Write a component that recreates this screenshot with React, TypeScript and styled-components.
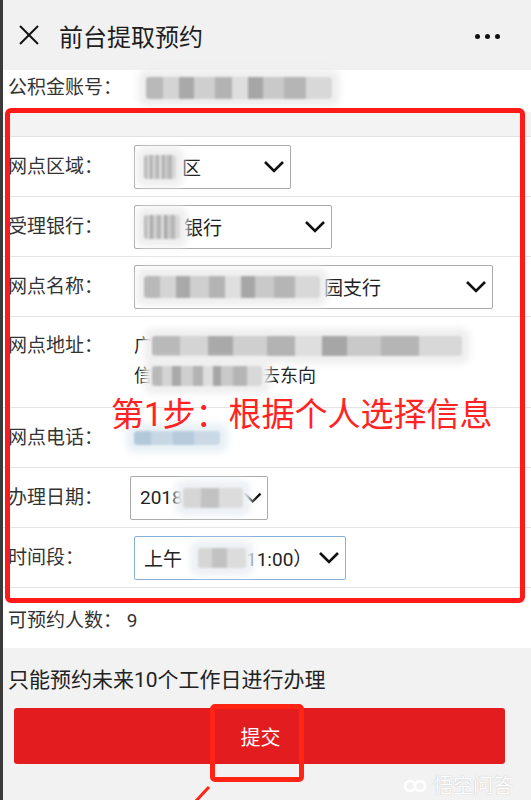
import React from "react";
import styled, { createGlobalStyle } from "styled-components";

const GlobalStyle = createGlobalStyle`
  html, body {
    margin: 0;
    padding: 0;
    background: #f2f2f2;
  }
  body {
    font-family: Roboto, "Noto Sans CJK SC", sans-serif;
    color: #333;
  }
`;

type Tone = "gray" | "blue" | "light";

const mosaics: Record<Tone, string> = {
  gray: `linear-gradient(90deg, #b9b9b9 0 9%, #d4d4d4 9% 18%, #a9a9a9 18% 26%, #cfcfcf 26% 37%, #b3b3b3 37% 46%, #dedede 46% 55%, #a6a6a6 55% 63%, #c9c9c9 63% 74%, #b5b5b5 74% 86%, #d8d8d8 86% 100%)`,
  blue: `linear-gradient(90deg, #b3c9da 0 20%, #c7d7e4 20% 45%, #b6cadb 45% 70%, #cad9e5 70% 100%)`,
  light: `linear-gradient(90deg, #d6d6d6 0 30%, #c2c2c2 30% 60%, #dcdcdc 60% 100%)`,
};

const halos: Record<Tone, string> = {
  gray: "rgba(238, 238, 238, 0.95)",
  blue: "rgba(232, 240, 246, 0.95)",
  light: "rgba(236, 240, 244, 0.95)",
};

const Page = styled.div`
  width: 531px;
  height: 800px;
  overflow: hidden;
  box-sizing: border-box;
  border-left: 3px solid #3a3a3a;
  background: #f2f2f2;
`;

const Header = styled.div`
  height: 70px;
  display: flex;
  align-items: center;
  padding-left: 15px;
  background: #f1f1f1;
`;

const Title = styled.div`
  margin-left: 19px;
  font-size: 24px;
  color: #1e1e1e;
  flex: 1;
`;

const Dots = styled.div`
  display: flex;
  gap: 5px;
  margin-right: 31px;
  margin-top: 2px;
`;

const Dot = styled.span`
  width: 5px;
  height: 5px;
  border-radius: 50%;
  background: #111;
`;

const AccountRow = styled.div`
  height: 42px;
  box-sizing: border-box;
  padding: 0 0 6px 5px;
  display: flex;
  align-items: center;
  background: #fff;
  font-size: 19px;
`;

const FormSection = styled.div`
  position: relative;
  background: #fff;
`;

const Band = styled.div`
  height: 24px;
  background: #f3f3f3;
  border-bottom: 1px solid #e2e2e2;
`;

const Row = styled.div<{ $h?: number; $top?: boolean }>`
  height: ${(p) => p.$h ?? 60}px;
  box-sizing: border-box;
  display: flex;
  align-items: ${(p) => (p.$top ? "flex-start" : "center")};
  padding: ${(p) => (p.$top ? "14px 0 0 5px" : "0 0 0 5px")};
  border-bottom: 1px solid #e4e4e4;
  background: #fff;
`;

const Label = styled.div`
  flex: 0 0 126px;
  font-size: 19px;
  color: #333;
  line-height: 30px;
`;

const Select = styled.div<{ $w: number; $focus?: boolean; $shift?: number }>`
  width: ${(p) => p.$w}px;
  height: 44px;
  margin-left: ${(p) => p.$shift ?? 0}px;
  box-sizing: border-box;
  display: flex;
  align-items: center;
  padding: 0 5px 0 9px;
  border: 1px solid ${(p) => (p.$focus ? "#86b0db" : "#aaaaaa")};
  border-radius: 2px;
  background: #fff;
  font-size: 19px;
  color: #222;
`;

const SelectText = styled.div`
  flex: 1;
  display: flex;
  align-items: center;
  white-space: nowrap;
  overflow: visible;
`;

const Smudge = styled.span<{ $w: number; $h?: number; $tone?: Tone }>`
  display: inline-block;
  width: ${(p) => p.$w}px;
  height: ${(p) => p.$h ?? 20}px;
  background: ${(p) => mosaics[p.$tone ?? "gray"]};
  box-shadow: 0 0 6px 8px ${(p) => halos[p.$tone ?? "gray"]};
  border-radius: 3px;
  filter: blur(0.8px);
  vertical-align: middle;
`;

const Address = styled.div`
  font-size: 18px;
  line-height: 30px;
  color: #222;
`;

const AddressLine = styled.div`
  display: flex;
  align-items: center;
`;

const StepNote = styled.div`
  position: absolute;
  left: 108px;
  top: 276px;
  font-size: 33px;
  color: #ff2323;
  white-space: nowrap;
`;

const RedFrame = styled.div`
  position: absolute;
  left: 2px;
  right: 6px;
  top: -4px;
  bottom: -15px;
  border: 5px solid #ff1a1a;
  border-radius: 6px;
  pointer-events: none;
`;

const CountRow = styled.div`
  height: 60px;
  box-sizing: border-box;
  padding: 0 0 0 5px;
  display: flex;
  align-items: center;
  background: #fff;
  font-size: 19px;
`;

const Footer = styled.div`
  position: relative;
  padding: 17px 0 0 5px;
  height: 152px;
  box-sizing: border-box;
`;

const Notice = styled.div`
  font-size: 21px;
  line-height: 30px;
  color: #222;
`;

const SubmitButton = styled.button`
  display: block;
  margin: 13px 0 0 6px;
  width: 491px;
  height: 56px;
  padding-left: 8px;
  border: none;
  border-radius: 3px;
  background: #e31c1f;
  color: #fff;
  font-family: inherit;
  font-size: 20px;
`;

const Highlight = styled.div`
  position: absolute;
  left: 207px;
  top: 56px;
  width: 94px;
  height: 78px;
  box-sizing: border-box;
  border: 5px solid #ff2414;
  border-radius: 5px;
`;

const Arrow = styled.svg`
  position: absolute;
  left: 186px;
  top: 138px;
`;

const Watermark = styled.div`
  position: absolute;
  right: 18px;
  top: 122px;
  display: flex;
  align-items: center;
  gap: 6px;
  font-size: 20px;
  color: #fff;
  text-shadow: 0 0 1px rgba(0, 0, 0, 0.3);
`;

const Chevron = () => (
  <svg width="22" height="14" viewBox="0 0 22 14">
    <polyline points="2,2 11,11 20,2" fill="none" stroke="#111" strokeWidth="2.6" />
  </svg>
);

const CloseIcon = () => (
  <svg width="22" height="22" viewBox="0 0 22 22">
    <line x1="2" y1="2" x2="20" y2="20" stroke="#111" strokeWidth="2" />
    <line x1="20" y1="2" x2="2" y2="20" stroke="#111" strokeWidth="2" />
  </svg>
);

const App = () => {
  return (
    <>
      <GlobalStyle />
      <Page>
        <Header>
          <CloseIcon />
          <Title>前台提取预约</Title>
          <Dots>
            <Dot />
            <Dot />
            <Dot />
          </Dots>
        </Header>

        <AccountRow>
          <Label>公积金账号：</Label>
          <Smudge $w={186} $h={22} style={{ marginLeft: 12 }} />
        </AccountRow>

        <FormSection>
          <Band />
          <Row>
            <Label>网点区域：</Label>
            <Select $w={157}>
              <SelectText>
                <Smudge $w={32} $h={24} />
                <span style={{ marginLeft: 6 }}>区</span>
              </SelectText>
              <Chevron />
            </Select>
          </Row>
          <Row>
            <Label>受理银行：</Label>
            <Select $w={198}>
              <SelectText>
                <Smudge $w={36} $h={24} />
                <span style={{ marginLeft: 4 }}>银行</span>
              </SelectText>
              <Chevron />
            </Select>
          </Row>
          <Row>
            <Label>网点名称：</Label>
            <Select $w={359}>
              <SelectText>
                <Smudge $w={176} $h={22} />
                <span style={{ marginLeft: 4 }}>园支行</span>
              </SelectText>
              <Chevron />
            </Select>
          </Row>
          <Row $h={91} $top>
            <Label>网点地址：</Label>
            <Address>
              <AddressLine>
                <span>广</span>
                <Smudge $w={310} $h={20} />
              </AddressLine>
              <AddressLine>
                <span>信</span>
                <Smudge $w={110} $h={20} />
                <span>去东向</span>
              </AddressLine>
            </Address>
          </Row>
          <Row>
            <Label>网点电话：</Label>
            <Smudge $w={86} $h={14} $tone="blue" />
          </Row>
          <Row>
            <Label>办理日期：</Label>
            <Select $w={138} $shift={-4}>
              <SelectText>
                <span>2018</span>
                <Smudge $w={60} $h={20} $tone="light" />
              </SelectText>
              <Chevron />
            </Select>
          </Row>
          <Row>
            <Label>时间段：</Label>
            <Select $w={212} $focus>
              <SelectText>
                <span>上午</span>
                <Smudge $w={48} $h={20} $tone="light" style={{ marginLeft: 16 }} />
                <span>11:00）</span>
              </SelectText>
              <Chevron />
            </Select>
          </Row>
          <StepNote>第1步：根据个人选择信息</StepNote>
          <RedFrame />
        </FormSection>

        <CountRow>可预约人数： 9</CountRow>

        <Footer>
          <Notice>只能预约未来10个工作日进行办理</Notice>
          <SubmitButton>提交</SubmitButton>
          <Highlight />
          <Arrow width="24" height="16" viewBox="0 0 24 16">
            <line x1="20" y1="1" x2="6" y2="16" stroke="#ff2414" strokeWidth="3" />
          </Arrow>
          <Watermark>
            <svg width="24" height="14" viewBox="0 0 24 14">
              <circle cx="7" cy="8" r="5" fill="none" stroke="#fff" strokeWidth="2.4" />
              <circle cx="17" cy="8" r="5" fill="none" stroke="#fff" strokeWidth="2.4" />
            </svg>
            <span>悟空问答</span>
          </Watermark>
        </Footer>
      </Page>
    </>
  );
};

export default App;
